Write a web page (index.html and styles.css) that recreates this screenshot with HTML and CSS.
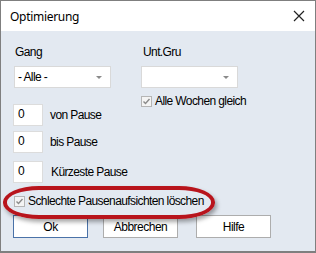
FILE: index.html
```html
<!DOCTYPE html>
<html lang="de">
<head>
    <meta charset="UTF-8">
    <title>Optimierung</title>
    <link rel="stylesheet" href="styles.css">
</head>
<body>
    <div class="window">
        <div class="titlebar">
            <span class="title">Optimierung</span>
            <svg class="close" width="12" height="12" viewBox="0 0 12 12">
                <path d="M1 1 L11 11 M11 1 L1 11" stroke="#222" stroke-width="1.2" fill="none"/>
            </svg>
        </div>

        <div class="content">
            <div class="top">
                <div class="col col-gang">
                    <div class="label">Gang</div>
                    <div class="select"><span>- Alle -</span><i class="arrow"></i></div>
                </div>
                <div class="col col-gru">
                    <div class="label">Unt.Gru</div>
                    <div class="select"><span></span><i class="arrow"></i></div>
                    <label class="check check-weeks">
                        <svg class="box" width="11" height="11" viewBox="0 0 11 11">
                            <rect x="0.5" y="0.5" width="10" height="10" fill="#f4f4f4" stroke="#b5b5b5"/>
                            <path d="M2.5 5.5 L4.5 7.5 L8.5 3" stroke="#8a8a8a" stroke-width="1.4" fill="none"/>
                        </svg>
                        Alle Wochen gleich
                    </label>
                </div>
            </div>

            <div class="field field-1"><div class="num">0</div><span>von Pause</span></div>
            <div class="field field-2"><div class="num">0</div><span>bis Pause</span></div>
            <div class="field field-3"><div class="num">0</div><span class="shift">Kürzeste Pause</span></div>

            <label class="check check-bad">
                <svg class="box" width="11" height="11" viewBox="0 0 11 11">
                    <rect x="0.5" y="0.5" width="10" height="10" fill="#f4f4f4" stroke="#b5b5b5"/>
                    <path d="M2.5 5.5 L4.5 7.5 L8.5 3" stroke="#8a8a8a" stroke-width="1.4" fill="none"/>
                </svg>
                Schlechte Pausenaufsichten löschen
            </label>

            <div class="buttons">
                <button class="btn default">Ok</button>
                <button class="btn">Abbrechen</button>
                <button class="btn">Hilfe</button>
            </div>
        </div>

        <div class="mark"></div>
    </div>
</body>
</html>
```

FILE: styles.css
```css
body {
    margin: 0;
    padding: 0;
    background: #ffffff;
}

.window {
    position: relative;
    width: 316px;
    height: 253px;
    box-sizing: border-box;
    border: 1px solid #7f7f7f;
    border-bottom-width: 2px;
    background: #e3e9f1;
    font-family: 'Liberation Sans', Arial, sans-serif;
    font-size: 12px;
    letter-spacing: -0.6px;
    color: #000;
    overflow: hidden;
}

.titlebar {
    height: 30px;
    background: #fff;
    display: flex;
    align-items: center;
    justify-content: space-between;
    padding: 0 10px 0 9px;
}

.title {
    font-family: 'Noto Sans', 'Open Sans', sans-serif;
    font-size: 12px;
    letter-spacing: -0.3px;
    color: #000;
}

.content {
    padding: 14px 0 0 12px;
}

.top {
    display: flex;
}

.col-gang {
    width: 128px;
}

.label {
    height: 14px;
    line-height: 14px;
    padding-left: 2px;
}

.select {
    margin-top: 7px;
    width: 97px;
    height: 22px;
    box-sizing: border-box;
    background: #fff;
    border: 1px solid #d9d9d9;
    display: flex;
    align-items: center;
    justify-content: space-between;
    padding: 0 8px 0 3px;
}

.col-gang .select {
    margin-left: 1px;
}

.arrow {
    width: 0;
    height: 0;
    border-left: 3px solid transparent;
    border-right: 3px solid transparent;
    border-top: 3px solid #8a8a8a;
}

.check {
    display: flex;
    align-items: center;
    gap: 3px;
    height: 14px;
}

.check-weeks {
    margin-top: 6px;
}

.field {
    display: flex;
    align-items: center;
    gap: 7px;
}

.field-1 {
    margin-top: -4px;
}

.field-2 {
    margin-top: 5px;
}

.field-3 {
    margin-top: 8px;
}

.num {
    width: 30px;
    height: 22px;
    box-sizing: border-box;
    background: #fff;
    border: 1px solid #dcdcdc;
    padding: 2px 0 0 4px;
    line-height: 14px;
}

.shift {
    margin-left: 1px;
}

.check-bad {
    margin: 11px 0 0 1px;
}

.buttons {
    display: flex;
    gap: 15px;
    margin-top: 7px;
}

.btn {
    width: 75px;
    height: 23px;
    box-sizing: border-box;
    background: #fff;
    border: 1px solid #adadad;
    font-family: 'Liberation Sans', Arial, sans-serif;
    font-size: 12px;
    letter-spacing: -0.5px;
    padding: 0;
    color: #000;
}

.btn:nth-child(3) {
    margin-left: 3px;
}

.btn.default {
    border-color: #4a72a8;
}

.mark {
    position: absolute;
    left: 2px;
    top: 185px;
    width: 212px;
    height: 33px;
    box-sizing: border-box;
    border: 4px solid #b8141c;
    border-radius: 36px / 16px;
    box-shadow: 2px 3px 4px rgba(0, 0, 0, 0.35);
}
```
